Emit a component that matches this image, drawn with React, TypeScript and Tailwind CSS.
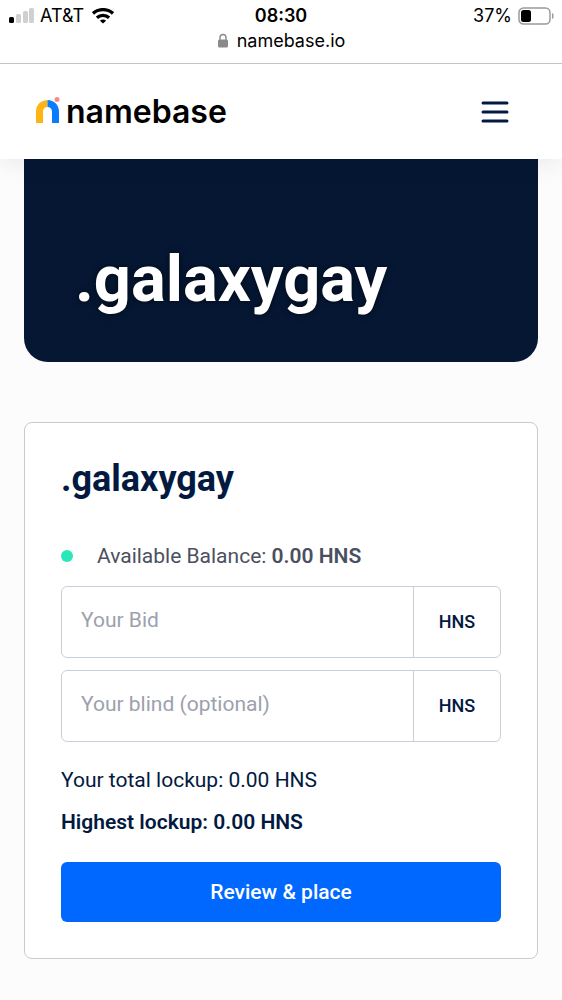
import { useState } from "react";

type AmountFieldType = {
  id: string;
  label: string;
  value: string;
  onChange: (value: string) => void;
};

const StatusBar = () => {
  return (
    <div className="relative z-20 border-b border-[#c4c4c6] bg-white px-2 pt-1 pb-2.5 font-['Inter',sans-serif] text-lg leading-6 text-black">
      <div className="grid grid-cols-3 items-center">
        <div className="flex items-center gap-2">
          <div className="flex items-center gap-1.5">
            <svg className="h-4 w-[26px]" viewBox="0 0 26 16" aria-hidden="true">
              <rect x="1" y="9" width="5" height="6" rx="1.5" fill="#000" />
              <rect x="8" y="6" width="5" height="9" rx="1.5" fill="#d0d0d0" />
              <rect x="15" y="3" width="5" height="12" rx="1.5" fill="#d0d0d0" />
              <rect x="21" y="0" width="5" height="15" rx="1.5" fill="#d0d0d0" />
            </svg>
            <span>AT&amp;T</span>
          </div>
          <svg className="h-4 w-[22px]" viewBox="0 0 22 16" fill="none" stroke="#000" strokeWidth="3.4" aria-hidden="true">
            <path d="M1 5.4C6.6.4 15.4.4 21 5.4" />
            <path d="M4.9 9.7c3.5-3.1 8.7-3.1 12.2 0" />
            <path d="M11 15.6 7.9 12.7c1.7-1.5 4.5-1.5 6.2 0z" fill="#000" stroke="none" />
          </svg>
        </div>
        <span className="text-center font-semibold">08:30</span>
        <div className="flex items-center justify-end gap-1.5">
          <span>37%</span>
          <svg className="h-[18px] w-9" viewBox="0 0 36 18" aria-hidden="true">
            <rect x="1" y="1" width="31" height="16" rx="4.5" fill="none" stroke="#9a9a9a" strokeWidth="1.5" />
            <rect x="3" y="3" width="10" height="12" rx="2.5" fill="#000" />
            <path d="M34 6c2.2.8 2.2 5.2 0 6z" fill="#9a9a9a" />
          </svg>
        </div>
      </div>
      <div className="flex items-center justify-center gap-2 leading-[25px]">
        <svg className="h-4 w-3" viewBox="0 0 12 16" aria-hidden="true">
          <path d="M3 7V4.5a3 3 0 0 1 6 0V7" fill="none" stroke="#8a8a8c" strokeWidth="1.4" />
          <rect x="1" y="6.5" width="10" height="8" rx="1.5" fill="#8a8a8c" />
        </svg>
        <span>namebase.io</span>
      </div>
    </div>
  );
};

const Header = () => {
  return (
    <header className="relative z-10 flex h-[95px] items-center justify-between bg-white pr-[53px] pl-9 shadow-[0_4px_24px_rgba(0,0,0,0.08)]">
      <a href="#" className="flex items-center gap-1.5">
        <svg className="h-[30px] w-6" viewBox="0 0 24 30" aria-hidden="true">
          <path d="M0 26V14.5C0 8 5 3 11.5 3v7C9 10 7 12 7 14.5V26z" fill="#fdb515" />
          <path d="M11.5 3C18 3 23 8 23 14.5V26h-7V14.5c0-2.5-2-4.5-4.5-4.5z" fill="#0a7cff" />
          <circle cx="21" cy="2.5" r="2.5" fill="#f58a8a" />
        </svg>
        <span className="font-['Inter',sans-serif] text-[32px] leading-10 font-semibold text-black">namebase</span>
      </a>
      <button type="button" aria-label="Open menu">
        <svg className="h-6 w-7" viewBox="0 0 28 24" stroke="#021a40" strokeWidth="3" strokeLinecap="round" aria-hidden="true">
          <path d="M2 3h24M2 12h24M2 21h24" />
        </svg>
      </button>
    </header>
  );
};

const AmountField = (props: AmountFieldType) => {
  return (
    <div className="flex h-[72px] rounded-md border border-[#c9d0dc] bg-white">
      <input
        id={props.id}
        type="text"
        inputMode="decimal"
        aria-label={props.label}
        placeholder={props.label}
        value={props.value}
        onChange={(e) => props.onChange(e.target.value)}
        className="min-w-0 flex-1 px-[19px] pb-1 text-[21px] text-[#021a40] outline-none placeholder:text-[#9ca1ae]"
      />
      <label
        htmlFor={props.id}
        className="flex w-[87px] items-center justify-center border-l border-[#c9d0dc] text-lg font-medium"
      >
        HNS
      </label>
    </div>
  );
};

const BidCard = () => {
  const [bid, setBid] = useState("");
  const [blind, setBlind] = useState("");
  const lockup = (Number(bid) || 0) + (Number(blind) || 0);

  return (
    <form
      onSubmit={(e) => e.preventDefault()}
      className="rounded-lg border border-[#c8cace] bg-white p-9 text-[21px] leading-[30px]"
    >
      <h2 className="text-4xl leading-10 font-bold">.galaxygay</h2>
      <div className="mt-[42px] flex items-center gap-6 text-[#4b5060]">
        <span className="size-3 rounded-full bg-[#29e7b9]" />
        <p>
          Available Balance: <span className="font-semibold">0.00 HNS</span>
        </p>
      </div>
      <div className="mt-[15px] flex flex-col gap-3">
        <AmountField id="bid" label="Your Bid" value={bid} onChange={setBid} />
        <AmountField id="blind" label="Your blind (optional)" value={blind} onChange={setBlind} />
      </div>
      <p className="mt-[23px]">Your total lockup: {lockup.toFixed(2)} HNS</p>
      <p className="mt-3 font-semibold">Highest lockup: 0.00 HNS</p>
      <button
        type="submit"
        className="mt-[25px] h-[60px] w-full rounded-md bg-[#0068ff] font-medium text-white"
      >
        Review &amp; place
      </button>
    </form>
  );
};

const App = () => {
  return (
    <div className="min-h-screen bg-[#fcfcfc] font-['Roboto',sans-serif] text-[#021a40]">
      <StatusBar />
      <Header />
      <main className="px-6 pb-10">
        <div className="rounded-b-3xl bg-[#051733] px-[51px] pt-[84px] pb-[47px]">
          <h1 className="text-[65px] leading-[72px] font-bold text-white [text-shadow:0_0_6px_rgba(0,0,0,0.6)]">
            .galaxygay
          </h1>
        </div>
        <div className="mt-[60px]">
          <BidCard />
        </div>
      </main>
    </div>
  );
};

export default App;
